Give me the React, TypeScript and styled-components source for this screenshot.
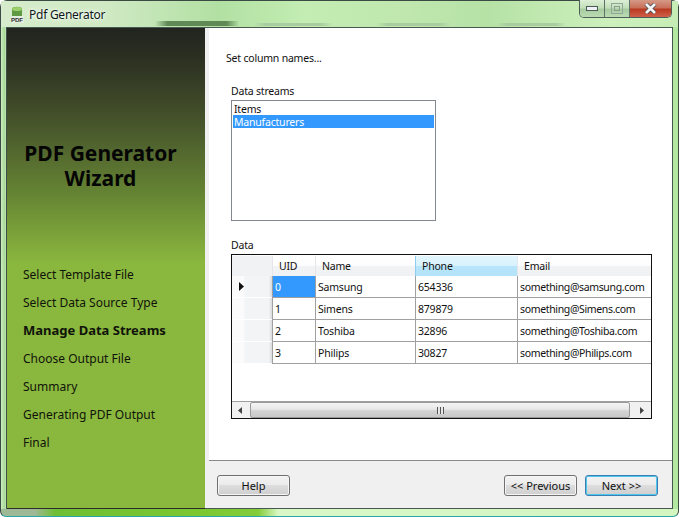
import React from "react";
import styled, { createGlobalStyle } from "styled-components";

const Global = createGlobalStyle`
  html, body { margin: 0; padding: 0; background: #fff; overflow: hidden; }
  #root { width: 679px; height: 517px; }
  * { box-sizing: border-box; }
`;

const UI = `"Noto Sans", "Open Sans", "Liberation Sans", sans-serif`;

const Frame = styled.div`
  position: relative;
  width: 679px;
  height: 517px;
  display: flex;
  flex-direction: column;
  border: 1px solid #3c4a44;
  border-bottom-color: #2aa6a8;
  border-radius: 7px 7px 6px 6px;
  background:
    linear-gradient(90deg, #9fb896 0, #9fb896 5%, #6fbf35 8%, #7cc832 30%, #84cc3a 38%, #d9f8c6 41%, #d3f5c0 100%) bottom / 100% 7px no-repeat,
    linear-gradient(90deg, #cdeebf 0, #a8d89a 0.5%, #dcf6cf 1%, #dcf6cf 98.4%, #b2e8a0 99%, #b2e8a0 100%);
  font-family: ${UI};
  font-size: 10.5px;
  letter-spacing: -0.2px;
  color: #111;
`;

const TitleBar = styled.div`
  height: 26px;
  flex: none;
  display: flex;
  align-items: center;
  padding: 0 6px 0 10px;
  gap: 5px;
  background:
    linear-gradient(90deg, transparent, #5f8a55 15%, #5f8a55 85%, transparent) 154px 20px / 84px 5px no-repeat,
    linear-gradient(90deg, transparent, #a9cda0 15%, #a9cda0 85%, transparent) 252px 22px / 80px 3px no-repeat,
    linear-gradient(90deg, transparent, #a9cda0 15%, #a9cda0 85%, transparent) 375px 22px / 75px 3px no-repeat,
    linear-gradient(90deg, transparent, #a9cda0 15%, #a9cda0 85%, transparent) 495px 22px / 70px 3px no-repeat,
    linear-gradient(90deg, #d6eccc 0%, #cfe9c3 16%, #b2e0a3 32%, #c3edb2 45%, #bfe7ae 60%, #b6e2a6 72%, #cdf0bd 90%, #c6ecb5 100%);
`;

const AppTitle = styled.span`
  font-size: 12px;
  letter-spacing: -0.25px;
  line-height: 16px;
  color: #10181a;
  margin-top: 2px;
  text-shadow: 0 0 6px #fff, 0 0 3px #fff;
`;

const Controls = styled.div`
  position: absolute;
  top: -1px;
  right: 6px;
  display: flex;
  height: 18px;
  border: 1px solid #4c5e56;
  border-top: none;
  border-radius: 0 0 5px 5px;
  overflow: hidden;
`;

const Ctl = styled.div<{ $w: number; $close?: boolean }>`
  width: ${(p) => p.$w}px;
  display: flex;
  align-items: center;
  justify-content: center;
  background: ${(p) =>
    p.$close
      ? "linear-gradient(180deg, #d59a87 0, #c8705a 45%, #b93a20 55%, #d0604a 100%)"
      : "linear-gradient(180deg, #dcefd6 0, #c2dfba 45%, #a7cca0 55%, #bcdcb4 100%)"};
  border-right: ${(p) => (p.$close ? "none" : "1px solid #5d7267")};
`;

const Client = styled.div`
  flex: 1;
  min-height: 0;
  margin: 0 5px 7px 5px;
  display: flex;
  background: #f0f0f0;
  border: 1px solid #46584f;
  border-left-color: #3f4f47;
`;

const Side = styled.aside`
  width: 198px;
  flex: none;
  display: flex;
  flex-direction: column;
  background: linear-gradient(180deg, #22241f 0, #2b2f21 6%, #45522b 19%, #648233 34%, #8ab73e 49%, #8ab73e 100%);
  border-bottom: 1px solid #2b2b2b;
  margin-bottom: -1px;
`;

const SideTitle = styled.h1`
  margin: 113px 0 0;
  padding-right: 11px;
  font-family: "Noto Sans", sans-serif;
  font-size: 21px;
  line-height: 25px;
  font-weight: 700;
  letter-spacing: 0;
  text-align: center;
  color: #050505;
`;

const Steps = styled.ol`
  list-style: none;
  margin: 75px 0 0;
  padding: 0 0 0 16px;
  display: flex;
  flex-direction: column;
`;

const Step = styled.li<{ $active?: boolean }>`
  height: 28px;
  line-height: ${(p) => (p.$active ? 16 : 18)}px;
  font-size: ${(p) => (p.$active ? 13 : 12)}px;
  font-weight: ${(p) => (p.$active ? 700 : 400)};
  letter-spacing: 0;
  color: #10130a;
`;

const Main = styled.main`
  flex: 1;
  min-width: 0;
  margin-left: 4px;
  display: flex;
  flex-direction: column;
`;

const Content = styled.section`
  height: 433px;
  flex: none;
  background: #fff;
  border-bottom: 1px solid #8a8a8a;
  padding: 22px 19px 0 17px;
  display: flex;
  flex-direction: column;
`;

const Lead = styled.div`
  line-height: 16px;
  margin-bottom: 18px;
`;

const Label = styled.div`
  line-height: 14px;
  margin-left: 5px;
`;

const ListBox = styled.div`
  width: 205px;
  height: 121px;
  margin: 2px 0 0 5px;
  padding: 1px;
  border: 1px solid #828790;
  background: #fff;
`;

const ListItem = styled.div<{ $sel?: boolean }>`
  height: 13px;
  line-height: 15px;
  padding-left: 1px;
  color: ${(p) => (p.$sel ? "#fff" : "#111")};
  background: ${(p) => (p.$sel ? "#3399ff" : "transparent")};
`;

const DataLabel = styled(Label)`
  margin-top: 17px;
`;

const Grid = styled.div`
  width: 421px;
  height: 165px;
  margin: 2px 0 0 5px;
  border: 1px solid #111;
  background: #fff;
  display: flex;
  flex-direction: column;
`;

const COLS = "40px 43px 100px 102px 1fr";

const HeadRow = styled.div`
  display: grid;
  grid-template-columns: ${COLS};
  height: 21px;
  flex: none;
  padding-top: 1px;
  border-bottom: 1px solid #a0a0a0;
`;

const HeadCell = styled.div<{ $hot?: boolean }>`
  padding-left: 6px;
  line-height: 21px;
  border-left: 1px solid ${(p) => (p.$hot ? "#8ecdf0" : "#e4e6e9")};
  background: ${(p) =>
    p.$hot
      ? "linear-gradient(180deg, #e3f6fe 0, #d8f2fd 45%, #b8e5fb 50%, #b2e2f9 100%)"
      : "linear-gradient(180deg, #ffffff 0, #fdfdfd 45%, #f2f3f4 50%, #f0f1f2 100%)"};
`;

const HeadCorner = styled(HeadCell)`
  border-left: none;
  background: #f1f2f4;
`;

const Row = styled.div`
  display: grid;
  grid-template-columns: ${COLS};
  height: 22px;
  flex: none;
  border-bottom: 1px solid #a0a0a0;
`;

const RowHead = styled.div`
  display: flex;
  align-items: center;
  padding-left: 7px;
  background: linear-gradient(90deg, #fbfbfb 0, #fbfbfb 30%, #f3f4f5 32%, #f3f4f5 92%, #d9dadb 100%);
  border-bottom: 1px solid #fff;
  margin-bottom: -1px;
`;

const Cell = styled.div<{ $sel?: boolean; $tight?: boolean }>`
  padding-left: 2px;
  line-height: 23px;
  letter-spacing: ${(p) => (p.$tight ? -0.35 : -0.2)}px;
  border-left: 1px solid #a0a0a0;
  white-space: nowrap;
  overflow: hidden;
  color: ${(p) => (p.$sel ? "#fff" : "#111")};
  background: ${(p) => (p.$sel ? "#3399ff" : "#fff")};
`;

const Spacer = styled.div`
  flex: 1;
`;

const ScrollBar = styled.div`
  height: 17px;
  flex: none;
  display: flex;
  align-items: stretch;
  background: #f1f1f1;
  border-top: 1px solid #a0a0a0;
`;

const ScrollBtn = styled.div<{ $end?: boolean }>`
  width: ${(p) => (p.$end ? 21 : 18)}px;
  flex: none;
  display: flex;
  align-items: center;
  justify-content: center;
  padding: ${(p) => (p.$end ? "0 0 0 3px" : "0 3px 0 0")};
`;

const Thumb = styled.div`
  flex: 1;
  display: flex;
  align-items: center;
  justify-content: center;
  border: 1px solid #9a9a9a;
  border-radius: 2px;
  background: linear-gradient(180deg, #f4f4f4 0, #e8e8e8 45%, #d4d4d4 55%, #c8c8c8 100%);
`;

const Grip = styled.div`
  width: 7px;
  height: 7px;
  background: repeating-linear-gradient(90deg, #555 0, #555 1px, #e6e6e6 1px, #e6e6e6 3px);
`;

const Footer = styled.footer`
  flex: 1;
  display: flex;
  align-items: flex-start;
  padding: 14px 14px 0 8px;
  gap: 8px;
`;

const Btn = styled.div<{ $def?: boolean }>`
  width: 73px;
  height: 21px;
  display: flex;
  align-items: center;
  justify-content: center;
  font-size: 11px;
  letter-spacing: 0;
  border: 1px solid ${(p) => (p.$def ? "#3c7fb1" : "#707070")};
  border-radius: 3px;
  color: #111;
  background: linear-gradient(180deg, #f3f3f3 0, #ebebeb 45%, #dddddd 50%, #cfcfcf 100%);
  box-shadow: ${(p) => (p.$def ? "inset 0 0 0 1px #4cc5ef" : "inset 0 0 0 1px #f5f5f5")};
`;

const Push = styled.div`
  flex: 1;
`;

const AppIcon = () => (
  <svg width="13" height="17" viewBox="0 0 13 17">
    <path d="M1 3c0-3 10-3 10 0v8H1z" fill="#5f9a43" />
    <ellipse cx="6" cy="3" rx="5" ry="2" fill="#9bd06a" />
    <rect x="0" y="10" width="13" height="7" fill="#e4eee0" />
    <text x="0" y="16" fontFamily="Liberation Sans, sans-serif" fontSize="6.2" fontWeight="700" fill="#333">PDF</text>
  </svg>
);

const rows = [
  ["0", "Samsung", "654336", "something@samsung.com"],
  ["1", "Simens", "879879", "something@Simens.com"],
  ["2", "Toshiba", "32896", "something@Toshiba.com"],
  ["3", "Philips", "30827", "something@Philips.com"],
];

const steps = [
  "Select Template File",
  "Select Data Source Type",
  "Manage Data Streams",
  "Choose Output File",
  "Summary",
  "Generating PDF Output",
  "Final",
];

export default function App() {
  return (
    <>
      <Global />
      <Frame>
        <TitleBar>
          <AppIcon />
          <AppTitle>Pdf Generator</AppTitle>
        </TitleBar>
        <Controls>
          <Ctl $w={25}>
            <svg width="12" height="5" viewBox="0 0 12 5"><rect x="0.5" y="0.5" width="11" height="4" fill="#eef2f2" stroke="#4a5a5a" /></svg>
          </Ctl>
          <Ctl $w={25}>
            <svg width="12" height="11" viewBox="0 0 12 11"><rect x="0.5" y="0.5" width="11" height="10" fill="none" stroke="#93a89a" /><rect x="3.5" y="3.5" width="5" height="4" fill="none" stroke="#8a9f90" /></svg>
          </Ctl>
          <Ctl $w={41} $close>
            <svg width="13" height="11" viewBox="0 0 13 11"><path d="M2 1l9 9M11 1l-9 9" stroke="#3f3f48" strokeWidth="4.2" /><path d="M2 1l9 9M11 1l-9 9" stroke="#f4f4f4" strokeWidth="2.8" /></svg>
          </Ctl>
        </Controls>
        <Client>
          <Side>
            <SideTitle>PDF Generator<br />Wizard</SideTitle>
            <Steps>
              {steps.map((s) => (
                <Step key={s} $active={s === "Manage Data Streams"}>{s}</Step>
              ))}
            </Steps>
          </Side>
          <Main>
            <Content>
              <Lead>Set column names...</Lead>
              <Label>Data streams</Label>
              <ListBox>
                <ListItem>Items</ListItem>
                <ListItem $sel>Manufacturers</ListItem>
              </ListBox>
              <DataLabel>Data</DataLabel>
              <Grid>
                <HeadRow>
                  <HeadCorner />
                  <HeadCell>UID</HeadCell>
                  <HeadCell>Name</HeadCell>
                  <HeadCell $hot>Phone</HeadCell>
                  <HeadCell>Email</HeadCell>
                </HeadRow>
                {rows.map((r, i) => (
                  <Row key={r[0]}>
                    <RowHead>
                      {i === 0 && (
                        <svg width="5" height="9" viewBox="0 0 5 9"><path d="M0 0l5 4.5L0 9z" fill="#111" /></svg>
                      )}
                    </RowHead>
                    {r.map((c, j) => (
                      <Cell key={j} $sel={i === 0 && j === 0} $tight={j === 3}>{c}</Cell>
                    ))}
                  </Row>
                ))}
                <Spacer />
                <ScrollBar>
                  <ScrollBtn>
                    <svg width="4" height="7" viewBox="0 0 4 7"><path d="M4 0L0 3.5 4 7z" fill="#444" /></svg>
                  </ScrollBtn>
                  <Thumb><Grip /></Thumb>
                  <ScrollBtn $end>
                    <svg width="4" height="7" viewBox="0 0 4 7"><path d="M0 0l4 3.5L0 7z" fill="#444" /></svg>
                  </ScrollBtn>
                </ScrollBar>
              </Grid>
            </Content>
            <Footer>
              <Btn>Help</Btn>
              <Push />
              <Btn>&lt;&lt; Previous</Btn>
              <Btn $def>Next &gt;&gt;</Btn>
            </Footer>
          </Main>
        </Client>
      </Frame>
    </>
  );
}
